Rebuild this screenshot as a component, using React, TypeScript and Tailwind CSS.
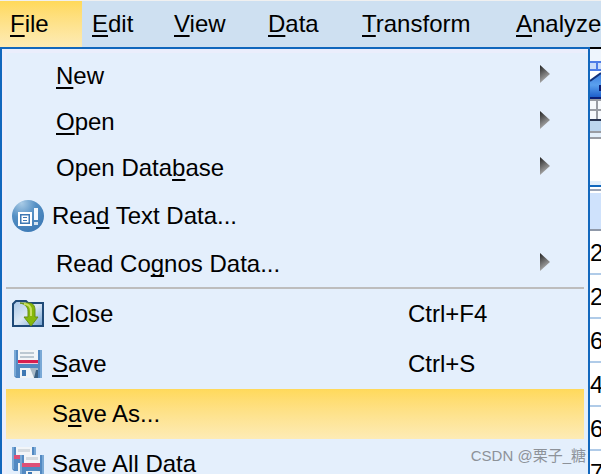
import React from "react";

interface MenuEntry {
  label: string;
  mnemonic: number;
  icon?: React.ReactNode;
  shortcut?: string;
  submenu?: boolean;
  active?: boolean;
  separator?: boolean;
}

const menuBar = [
  { label: "File", width: "w-[82px]", active: true },
  { label: "Edit", width: "w-[82px]" },
  { label: "View", width: "w-[94px]" },
  { label: "Data", width: "w-[94px]" },
  { label: "Transform", width: "w-[154px]" },
  { label: "Analyze", width: "w-[95px]" },
];

const cells = ["2", "2", "6", "4", "6", "7"];

// Label with the keyboard letter underlined
const Mnemonic = ({ text, index }: { text: string; index: number }) => (
  <span className="whitespace-pre">
    {text.slice(0, index)}
    <span className="underline decoration-2 underline-offset-3 [text-decoration-skip-ink:none]">
      {text[index]}
    </span>
    {text.slice(index + 1)}
  </span>
);

const ReadIcon = () => (
  <svg width="32" height="32" viewBox="0 0 32 32" aria-hidden="true">
    <defs>
      <radialGradient id="ball" cx="0.3" cy="0.1" r="0.9">
        <stop offset="0" stopColor="#a9cbe6" />
        <stop offset="0.5" stopColor="#5590c4" />
        <stop offset="1" stopColor="#3f7cb7" />
      </radialGradient>
    </defs>
    <circle cx="16" cy="16" r="16" fill="url(#ball)" />
    <path d="M7 13h12v12H7z" fill="#3f78b3" stroke="#fff" strokeWidth="2" />
    <path d="M9 15h8v8H9zM11 17v1h4v-1zM11 20v1h4v-1z" fill="#fff" fillRule="evenodd" />
    <path d="M9 15h8v8H9z" fill="none" stroke="#3f78b3" strokeWidth="1" />
    <path d="M22 8h4v12h-4z" fill="#f4f9fd" />
    <path d="M22 22h4v3h-4z" fill="#d3e3f1" />
  </svg>
);

const CloseIcon = () => (
  <svg width="32" height="28" viewBox="0 0 32 28" aria-hidden="true">
    <defs>
      <linearGradient id="folder" x1="0" y1="0" x2="1" y2="1">
        <stop offset="0" stopColor="#a8c6e6" />
        <stop offset="0.5" stopColor="#dbe8f5" />
        <stop offset="1" stopColor="#6f9fd0" />
      </linearGradient>
    </defs>
    <path d="M1 26V4l3-3h10l2 2h15v23z" fill="url(#folder)" stroke="#1f4a78" strokeWidth="2" />
    <path
      d="M8 3h9c4 0 6 3 6 7v7h3l-7 9-7-9h4v-6c0-4-3-7-8-8z"
      fill="#86b80b"
      stroke="#688f17"
      strokeWidth="1"
    />
    <path d="M12 4c5 0 7 3 7 7v5" fill="none" stroke="#c9df62" strokeWidth="2" />
  </svg>
);

const DiskShape = () => (
  <>
    <path d="M0 0h28v28H2l-2-2z" fill="#5289c2" />
    <path d="M0 0h2v26H0zM26 0h2v28h-2z" fill="#7aa9d6" />
    <path d="M4 0h20v10H4z" fill="#f2f5f8" />
    <path d="M6 2h14v2H6zM6 6h14v2H6z" fill="#bcc8d2" />
    <path d="M4 10h20v3H4z" fill="#d81e50" />
    <path d="M4 13h20v1H4z" fill="#f7c9d6" />
    <path d="M6 18h18v10H6z" fill="#f0f4f7" />
    <path d="M8 20h4v6H8z" fill="#3f78b3" />
    <path d="M16 18h8v10h-4z" fill="#a9bac7" />
    <path d="M22 20h2v8h-4z" fill="#3d6284" />
  </>
);

const SaveIcon = () => (
  <svg width="28" height="28" viewBox="0 0 28 28" aria-hidden="true">
    <DiskShape />
  </svg>
);

// Two smaller disks, with a plain label and a wider band
const SmallDisk = () => (
  <>
    <path d="M0 0h24v24H2l-2-2z" fill="#5289c2" />
    <path d="M0 0h2v22H0zM22 0h2v24h-2z" fill="#7aa9d6" />
    <path d="M4 0h16v8H4z" fill="#f2f5f8" />
    <path d="M6 2h12v3H6z" fill="#d5dbe0" />
    <path d="M2 8h18v4H2z" fill="#de5077" />
    <path d="M6 16h14v8H6z" fill="#f0f4f7" />
    <path d="M8 17h4v5H8z" fill="#3f78b3" />
  </>
);

const SaveAllIcon = () => (
  <svg width="32" height="34" viewBox="0 0 32 34" aria-hidden="true">
    <SmallDisk />
    <g transform="translate(8 8)">
      <SmallDisk />
    </g>
  </svg>
);

const Arrow = () => (
  <svg width="10" height="18" viewBox="0 0 10 18" aria-hidden="true">
    <defs>
      <linearGradient id="arrow" x1="0" y1="0" x2="0.4" y2="1">
        <stop offset="0" stopColor="#222" />
        <stop offset="1" stopColor="#b5b5b5" />
      </linearGradient>
    </defs>
    <path d="M0 0l10 9-10 9z" fill="url(#arrow)" />
  </svg>
);

const entries: MenuEntry[] = [
  { label: "New", mnemonic: 0, submenu: true },
  { label: "Open", mnemonic: 0, submenu: true },
  { label: "Open Database", mnemonic: 9, submenu: true },
  { label: "Read Text Data...", mnemonic: 3, icon: <ReadIcon /> },
  { label: "Read Cognos Data...", mnemonic: 7, submenu: true },
  { label: "Close", mnemonic: 0, icon: <CloseIcon />, shortcut: "Ctrl+F4", separator: true },
  { label: "Save", mnemonic: 0, icon: <SaveIcon />, shortcut: "Ctrl+S" },
  { label: "Save As...", mnemonic: 1, active: true },
  { label: "Save All Data", mnemonic: 5, icon: <SaveAllIcon /> },
];

const MenuRow = ({ entry }: { entry: MenuEntry }) => (
  <li className={entry.separator ? "border-t-2 border-[#bdbdbd]" : ""}>
    <button
      type="button"
      className={`flex w-full items-center text-left ${entry.submenu ? "h-[46px]" : "h-[50px]"} ${
        entry.active ? "bg-linear-to-b from-[#ffd95a] to-[#fdebb5]" : ""
      }`}
    >
      <span className={`flex shrink-0 justify-center ${entry.submenu ? "w-[50px]" : "w-[46px] pr-[2px]"}`}>
        {entry.icon}
      </span>
      <span className="flex-1">
        <Mnemonic text={entry.label} index={entry.mnemonic} />
      </span>
      {entry.shortcut && <span className="w-[176px]">{entry.shortcut}</span>}
      {entry.submenu && (
        <span className="w-[44px] pb-1">
          <Arrow />
        </span>
      )}
    </button>
  </li>
);

// Slice of the data editor that stays visible beside the open menu
const EditorEdge = () => (
  <aside className="w-[11px] shrink-0 overflow-hidden bg-white">
    <svg className="block" width="11" height="92" viewBox="0 0 11 92" aria-hidden="true">
      <defs>
        <linearGradient id="chart" x1="0" y1="0" x2="0" y2="1">
          <stop offset="0" stopColor="#3f7fe0" />
          <stop offset="0.5" stopColor="#5aa0ee" />
          <stop offset="1" stopColor="#1d5fcc" />
        </linearGradient>
      </defs>
      <path d="M0 0h11v2H0z" fill="#000" />
      <path d="M0 2h11v12H0z" fill="#eef5fd" />
      <path d="M0 14h11v10H0z" fill="#c9dcfa" />
      <path d="M0 14h11v2H0zM0 22h11v2H0zM6 14h2v10H6z" fill="#4c7be6" />
      <path d="M0 24h11v28H0z" fill="#fff" />
      <path d="M0 34l11-8v24H0z" fill="url(#chart)" />
      <path d="M0 34l11-8" stroke="#12327c" strokeWidth="2" />
      <path d="M9 38h2v6H9z" fill="#0a1f78" />
      <path d="M0 50h11v2H0z" fill="#0a1f78" />
      <path d="M0 52h11v20H0z" fill="#f7f9fc" />
      <path d="M0 52h11v2H0zM0 62h11v2H0zM6 54h2v18H6z" fill="#999ca3" />
      <path d="M0 72h11v2H0z" fill="#26324f" />
      <path d="M0 74h11v10H0z" fill="#bcd5ed" />
      <path d="M0 84h11v2H0zM0 90h11v2H0z" fill="#999ca3" />
      <path d="M0 86h11v4H0z" fill="#e3effb" />
    </svg>
    <div className="h-[42px]" />
    <div className="h-1 bg-[#e3effb]" />
    <div className="h-[2px] bg-[#1167bd]" />
    <div className="mt-[2px] h-[2px] bg-[#9aa3b5]" />
    <div className="mt-[2px] h-[38px] border-b-2 border-[#8f98a8] bg-[#cfe2fc]" />
    {cells.map((value, i) => (
      <div key={i} className="h-11 border-b-2 border-[#b0cbe8] leading-[44px]">
        {value}
      </div>
    ))}
  </aside>
);

export default function App() {
  return (
    <div className="flex h-screen flex-col overflow-hidden bg-white font-['Liberation_Sans',Arial,sans-serif] text-2xl text-black">
      <nav className="flex h-[47px] shrink-0 overflow-hidden border-t border-[#f0f0f0] bg-[#cee0f1]">
        {menuBar.map((item) => (
          <button
            key={item.label}
            type="button"
            className={`shrink-0 pl-[10px] text-left ${item.width} ${
              item.active ? "bg-linear-to-b from-[#ffd95a] to-[#fdebb5]" : ""
            }`}
          >
            <Mnemonic text={item.label} index={0} />
          </button>
        ))}
      </nav>

      <div className="flex min-h-0 flex-1">
        <div className="relative flex-1 overflow-hidden border-x-2 border-t-2 border-[#1167bd] bg-[#e4effc] px-1 pt-1 shadow-[inset_4px_4px_0_#ebeefc]">
          <ul>
            {entries.map((entry) => (
              <MenuRow key={entry.label} entry={entry} />
            ))}
          </ul>
          <div className="pointer-events-none absolute right-[2px] bottom-[6px] font-['Liberation_Sans','Noto_Sans_CJK_SC',sans-serif] text-[15px] leading-6 text-[#8d9299]">
            CSDN @栗子_糖
          </div>
        </div>
        <EditorEdge />
      </div>
    </div>
  );
}
